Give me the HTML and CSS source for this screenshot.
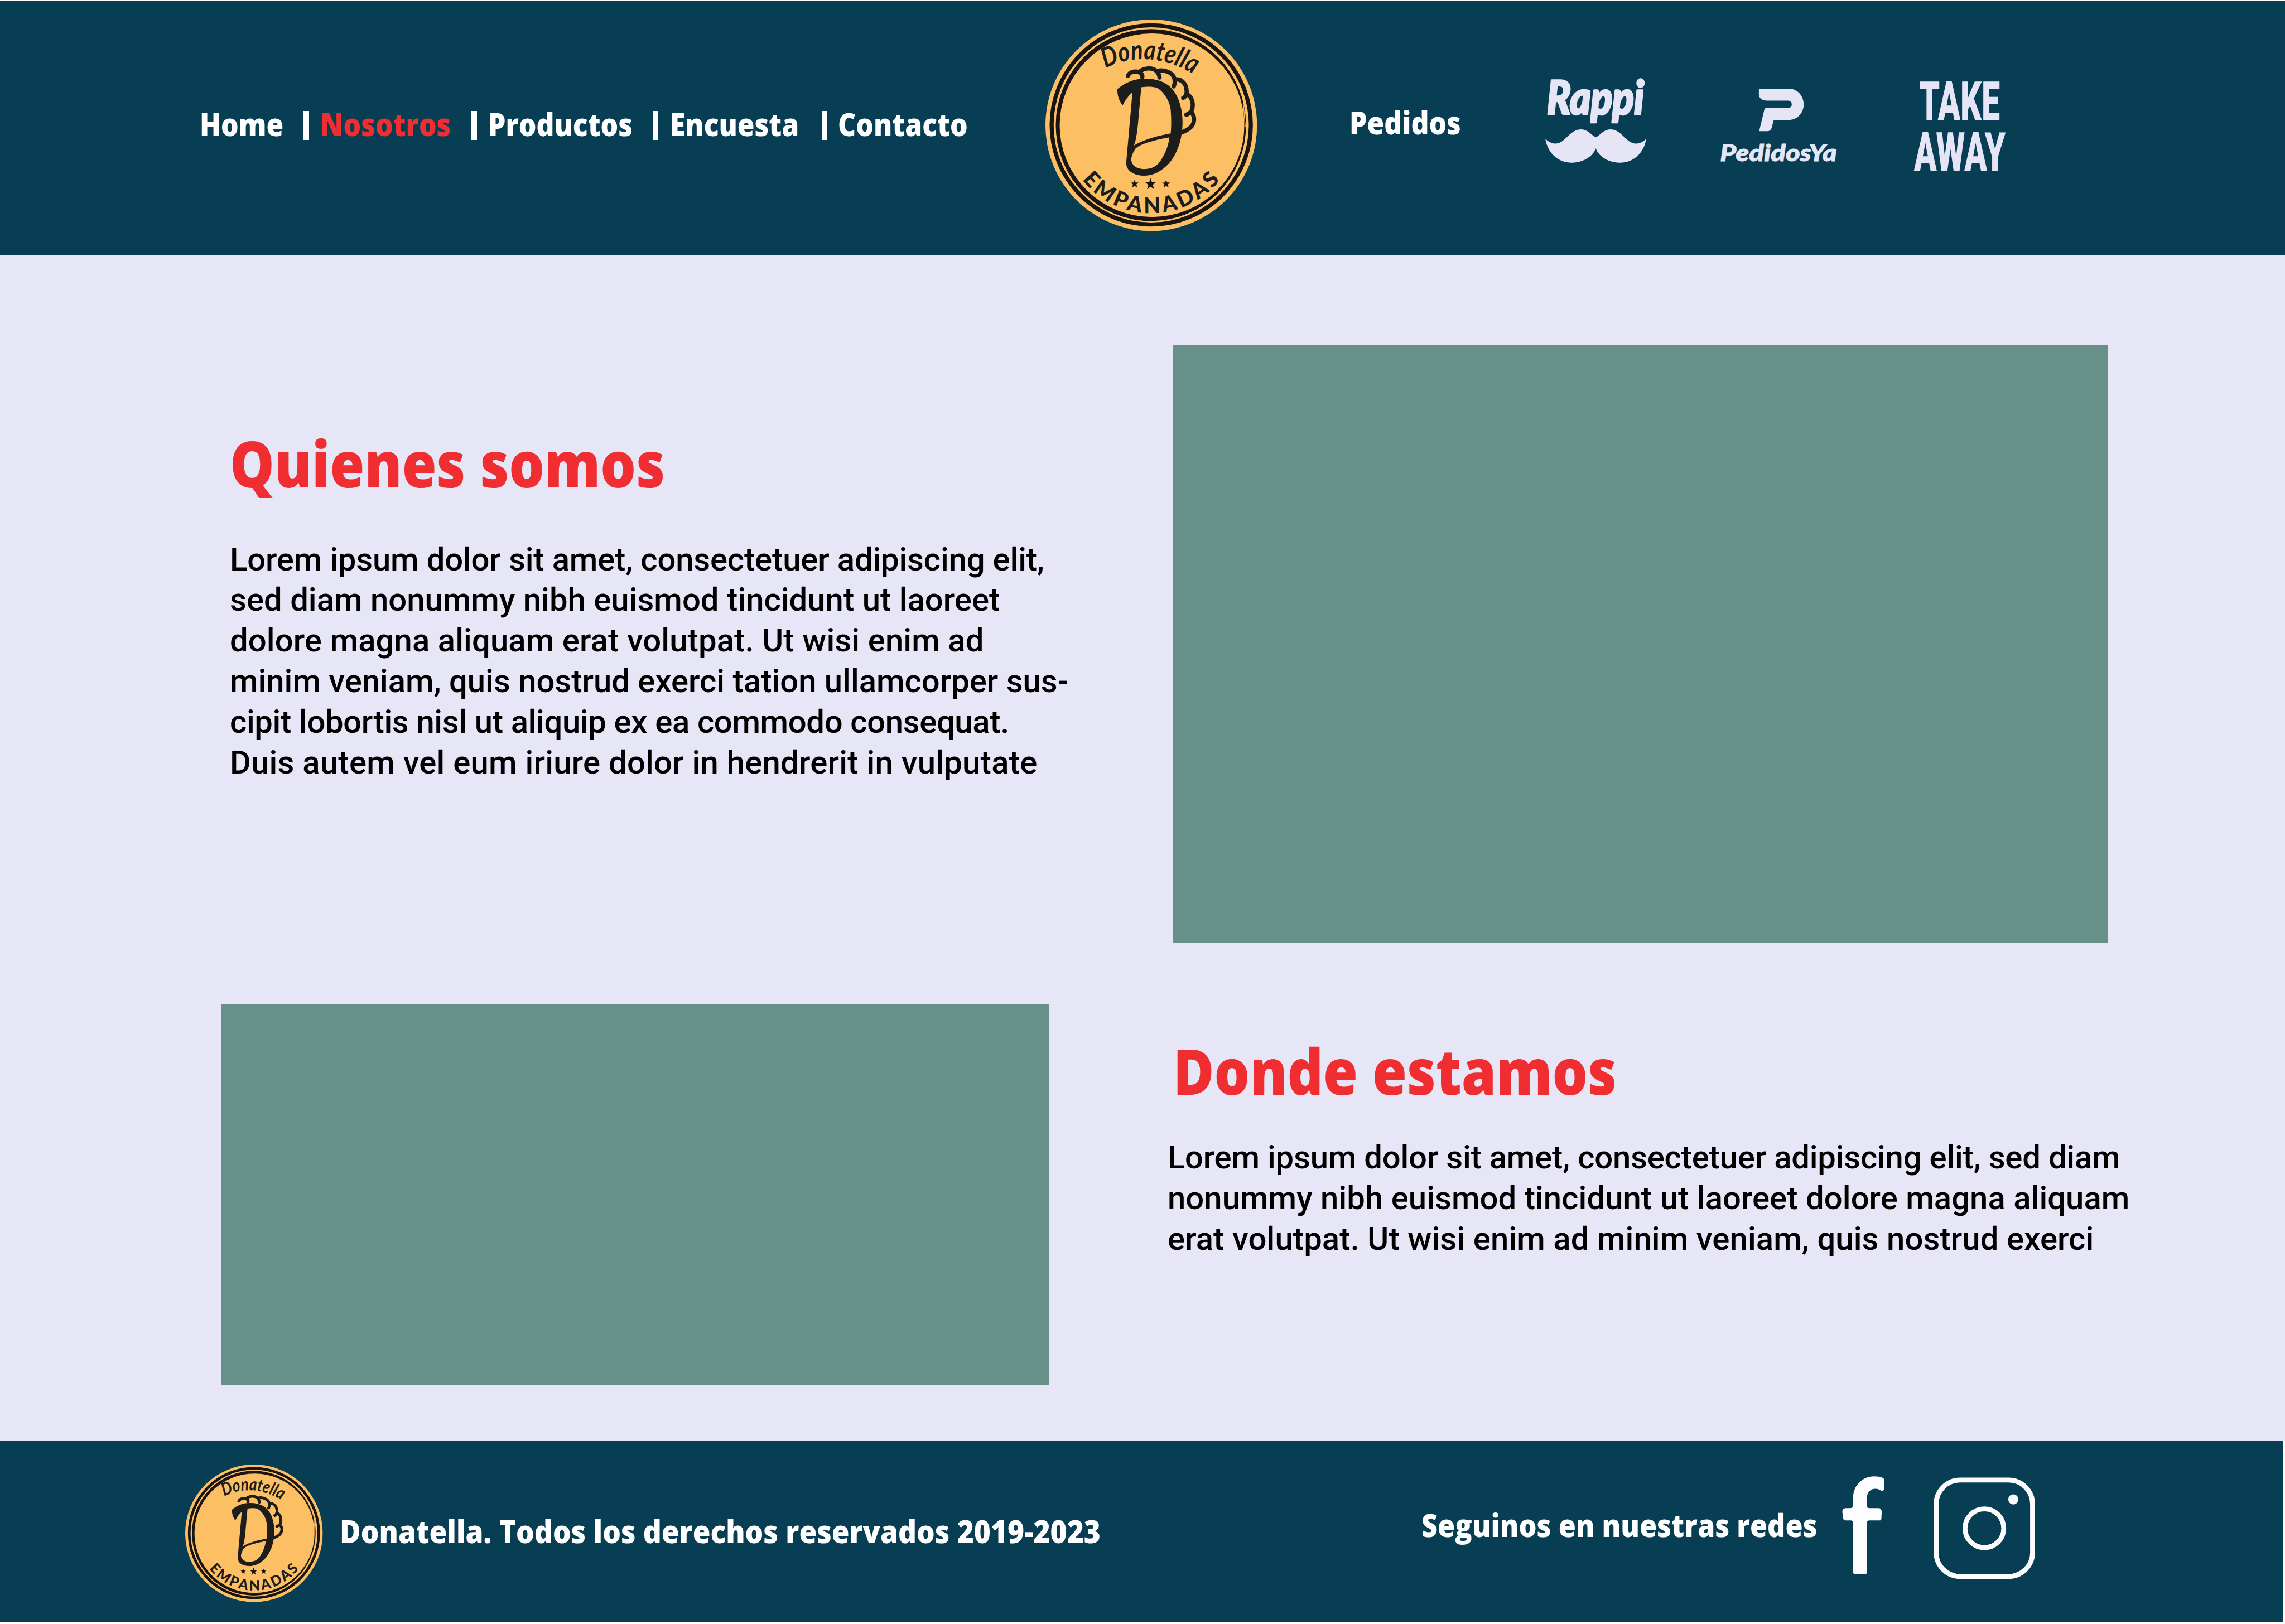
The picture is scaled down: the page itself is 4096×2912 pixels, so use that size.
FILE: index.html
```html
<!DOCTYPE html>
<html lang="es">
<head>
  <meta charset="utf-8">
  <title>Donatella Empanadas - Nosotros</title>
  <link rel="stylesheet" href="styles.css">
</head>
<body>
  <svg class="defs" aria-hidden="true">
    <symbol id="badge" viewBox="58 57 1250 1250">
      <circle class="badge-disc" cx="683" cy="682" r="625"/>
      <circle class="badge-ring" cx="683" cy="680" r="588.5"/>
      <path class="badge-ink" fill-rule="evenodd" d="M119 681a562 567 0 1 0 1124 0a562 567 0 1 0 -1124 0ZM142 682a545 542 0 1 0 1091 0a545 542 0 1 0 -1091 0Z"/>
      <path class="badge-cut" d="M1228 560L1238 690M1270 850L1240 950"/>
      <path id="arc-top" fill="none" d="M412 345Q665 220 942 385"/>
      <path id="arc-bottom" fill="none" d="M275 1003A519 519 0 0 0 1091 1003"/>
      <text class="badge-name"><textPath href="#arc-top" textLength="545" lengthAdjust="spacingAndGlyphs">Donatella</textPath></text>
      <path class="badge-letter" fill-rule="evenodd" d="M483 468C530 430 580 407 640 407C740 405 800 440 835 510C860 560 868 620 868 665C868 760 840 845 790 905C740 960 690 980 640 980C570 978 535 945 535 905L572 487C545 510 530 535 514 565C495 540 482 510 483 468ZM624 457C660 452 690 453 712 459C760 480 795 550 798 590C802 640 802 690 798 730C720 745 640 765 580 802C595 770 600 720 606 660ZM790 753C710 768 620 790 590 820C570 850 562 880 566 895C575 925 600 940 640 941C700 940 725 915 745 880C770 840 785 800 790 753Z"/>
      <path class="badge-crimp" d="M545 390C555 365 590 360 610 368C628 375 632 385 630 397M610 368C640 342 690 338 715 362C728 378 732 390 732 400M718 362C760 350 810 370 820 405C824 430 820 445 816 452M828 410C870 410 895 445 892 490C888 505 885 515 872 520M898 500C930 520 935 570 920 600C910 612 900 616 890 620M918 605C945 630 940 670 915 695C895 712 880 718 862 724"/>
      <path id="star" class="badge-ink" d="M679 995L687 1018L712 1018L692 1034L700 1060L679 1045L658 1060L666 1034L646 1018L671 1018Z"/>
      <path class="badge-ink" d="M585 1004L591 1020L609 1021L595 1032L600 1050L585 1040L570 1050L575 1032L561 1021L579 1020ZM771 1004L777 1020L795 1021L781 1032L786 1050L771 1040L756 1050L761 1032L747 1021L765 1020Z"/>
      <text class="badge-kind"><textPath href="#arc-bottom" textLength="936" lengthAdjust="spacing">EMPANADAS</textPath></text>
    </symbol>
  </svg>

  <header class="header">
    <nav class="nav">
      <a class="nav-link"><span>Home</span></a><i class="bar"></i>
      <a class="nav-link active"><span>Nosotros</span></a><i class="bar"></i>
      <a class="nav-link"><span>Productos</span></a><i class="bar"></i>
      <a class="nav-link"><span>Encuesta</span></a><i class="bar"></i>
      <a class="nav-link"><span>Contacto</span></a>
    </nav>
    <svg class="logo"><use href="#badge"/></svg>
    <a class="nav-link orders"><span>Pedidos</span></a>
    <svg class="rappi" viewBox="0 0 720 600">
      <text x="82" y="258" textLength="574" lengthAdjust="spacingAndGlyphs">Rappi</text>
      <path d="M73 402C100 428 120 430 134 430C190 430 215 346 285 346C325 346 350 385 371 393C392 385 417 346 457 346C525 346 550 430 608 430C622 430 642 428 669 402C655 490 590 543 516 543C450 543 390 510 371 458C352 510 292 543 226 543C152 543 87 490 73 402Z"/>
    </svg>
    <svg class="pedidosya" viewBox="0 0 810 570">
      <path d="M288 76H460C510 76 548 118 548 169C548 220 510 261 460 261H371L359 306Q354 327 334 327H288Q285 327 286 322L316 198Q318 191 324 191H456C485 191 485 147 456 147H330C300 147 283 130 283 108V82Q283 76 288 76Z"/>
      <text x="54" y="503" textLength="690" lengthAdjust="spacingAndGlyphs">PedidosYa</text>
    </svg>
    <svg class="takeaway" viewBox="0 0 165 170">
      <text x="9" y="74" textLength="145" lengthAdjust="spacingAndGlyphs">TAKE</text>
      <text x="0" y="165" textLength="164" lengthAdjust="spacingAndGlyphs">AWAY</text>
    </svg>
  </header>

  <main class="main">
    <section class="col col-left">
      <h2 class="title"><span>Quienes somos</span></h2>
      <p class="copy copy-left">
        <span class="l1">Lorem ipsum dolor sit amet, consectetuer adipiscing elit,</span>
        <span class="l2">sed diam nonummy nibh euismod tincidunt ut laoreet</span>
        <span class="l3">dolore magna aliquam erat volutpat. Ut wisi enim ad</span>
        <span class="l4">minim veniam, quis nostrud exerci tation ullamcorper sus-</span>
        <span class="l5">cipit lobortis nisl ut aliquip ex ea commodo consequat.</span>
        <span class="l6">Duis autem vel eum iriure dolor in hendrerit in vulputate</span>
      </p>
      <div class="photo photo-left"></div>
    </section>
    <section class="col col-right">
      <div class="photo photo-right"></div>
      <h2 class="title"><span>Donde estamos</span></h2>
      <p class="copy copy-right">
        <span class="r1">Lorem ipsum dolor sit amet, consectetuer adipiscing elit, sed diam</span>
        <span class="r2">nonummy nibh euismod tincidunt ut laoreet dolore magna aliquam</span>
        <span class="r3">erat volutpat. Ut wisi enim ad minim veniam, quis nostrud exerci</span>
      </p>
    </section>
  </main>

  <footer class="footer">
    <svg class="footer-logo"><use href="#badge"/></svg>
    <p class="legal"><span>Donatella. Todos los derechos reservados 2019-2023</span></p>
    <p class="follow"><span>Seguinos en nuestras redes</span></p>
    <svg class="facebook" viewBox="80 50 270 600">
      <path d="M152 245V185C152 110 208 57 275 57Q336 58 336 80V130Q334 145 318 142C305 136 298 131 285 131C255 131 234 150 234 185V235Q234 245 246 245H304Q320 247 321 265L319 306Q319 318 307 318H246Q234 319 234 332V624Q234 635 222 635H164Q152 635 152 624V330Q151 318 138 318H108Q94 317 92 302L88 266Q89 247 106 245H138Q151 243 152 228Z"/>
    </svg>
    <svg class="instagram" viewBox="620 55 615 615">
      <rect x="642" y="78" width="570" height="570" rx="142"/>
      <circle cx="927" cy="363" r="114.500"/>
      <circle class="dot" cx="1098" cy="192" r="30"/>
    </svg>
  </footer>
</body>
</html>
```
FILE: styles.css
```css
* { box-sizing: border-box; margin: 0; padding: 0; }

body {
  width: 4096px;
  height: 2912px;
  display: flex;
  flex-direction: column;
  background: #e7e6f6;
  overflow: hidden;
}

svg { display: block; flex: none; overflow: visible; }
.defs { position: absolute; width: 0; height: 0; }

/* Round brand badge */
.badge-disc { fill: #fcbf64; }
.badge-ring { fill: none; stroke: #1a1413; stroke-width: 24; }
.badge-ink { fill: #1a1413; }
.badge-cut { fill: none; stroke: #fcbf64; stroke-width: 5; }
.badge-letter { fill: #1d1d1b; }
.badge-crimp { fill: none; stroke: #1d1d1b; stroke-width: 25; stroke-linecap: round; stroke-linejoin: round; }
.badge-name { font: italic 700 160px Lato, sans-serif; fill: #1d1d1b; }
.badge-kind { font: 900 128px Lato, sans-serif; fill: #1d1d1b; }

/* Header */
.header {
  flex: none;
  height: 456.500px;
  padding-left: 357.500px;
  display: flex;
  align-items: flex-start;
  background: #083e53;
  border-top: 1.500px solid #fff;
}

.nav {
  width: 1516.500px;
  margin-top: 180.500px;
  display: grid;
  grid-template-columns: 186.500px 29.500px 271.500px 30px 295px 30.500px 272.500px 29px 236px;
}

.nav-link, .legal, .follow {
  font: 800 57px/80px "Open Sans", sans-serif;
  color: #fff;
  white-space: nowrap;
}

.nav-link span, .legal span, .follow span, .title span {
  display: inline-block;
  transform: scaleX(0.873);
  transform-origin: left;
}

.nav-link.active { color: #f02d30; }
.bar { width: 9.500px; height: 52px; margin-top: 17px; background: #fff; }
.logo { width: 379.300px; height: 379.300px; margin-top: 34px; }
.orders { width: 329px; margin: 178px 0 0 166px; }

.rappi { width: 218.400px; height: 182px; margin-top: 126px; fill: #e6e5f6; }
.rappi text { font: italic 900 276px Lato, sans-serif; stroke: #e6e5f6; stroke-width: 12; stroke-linejoin: round; }
.pedidosya { width: 245.700px; height: 172.900px; margin: 135px 0 0 100px; fill: #e6e5f6; }
.pedidosya text { font: italic 900 137px Lato, sans-serif; stroke: #e6e5f6; stroke-width: 3; }
.takeaway { width: 165px; height: 170px; margin: 139.500px 0 0 119px; fill: #e6e5f6; }
.takeaway text { font: 900 97px Roboto, sans-serif; }

/* Content */
.main { flex: 1; display: flex; }
.col-left { width: 2093px; padding: 293.800px 0 0 412px; }
.col-right { width: 1800px; padding-top: 161.200px; }

.title {
  font: 800 114px/160px "Open Sans", sans-serif;
  color: #f02d30;
  white-space: nowrap;
}
.title span { transform: scaleX(0.879); }

.copy { font: 500 58px/72.800px Roboto, sans-serif; color: #000; white-space: nowrap; }
.copy span { display: block; }
.copy-left { margin-top: 56.300px; }
.copy-right { margin-top: 40.700px; }
.l1 { letter-spacing: -0.16px; }
.l2 { letter-spacing: 0.03px; }
.l3 { letter-spacing: 0.11px; }
.l5 { letter-spacing: -0.35px; }
.l6 { letter-spacing: 0.24px; }
.r1 { letter-spacing: -0.2px; }
.r2 { letter-spacing: 0.06px; }
.r3 { letter-spacing: 0.1px; }

.photo { background: #679188; }
.photo-left { width: 1483.800px; height: 683px; margin: 398px 0 0 -16px; }
.photo-right { width: 1676px; height: 1073.300px; margin-left: 9.500px; }
.col-right .title { margin: 147.800px 0 0 9.500px; }

/* Footer */
.footer {
  flex: none;
  width: 4092px;
  height: 328.500px;
  padding-left: 331.600px;
  display: flex;
  align-items: flex-start;
  background: #083e53;
  border-bottom: 3px solid #fff;
  box-shadow: 4px 0 0 #fff;
}

.footer-logo { width: 246.600px; height: 246.600px; margin-top: 42px; }
.legal { width: 1909px; margin: 121.500px 0 0 30.500px; }
.follow { width: 752px; margin: 110.500px 0 0 30px; }
.legal span { transform: scaleX(0.9015); }
.follow span { transform: scaleX(0.883); }
.facebook { width: 81.900px; height: 182px; margin-top: 61.600px; fill: #fdfdff; }
.instagram { width: 186.500px; height: 186.500px; margin: 63px 0 0 82px; fill: none; stroke: #fdfdff; stroke-width: 29; }
.instagram .dot { fill: #fdfdff; stroke: none; }
```
